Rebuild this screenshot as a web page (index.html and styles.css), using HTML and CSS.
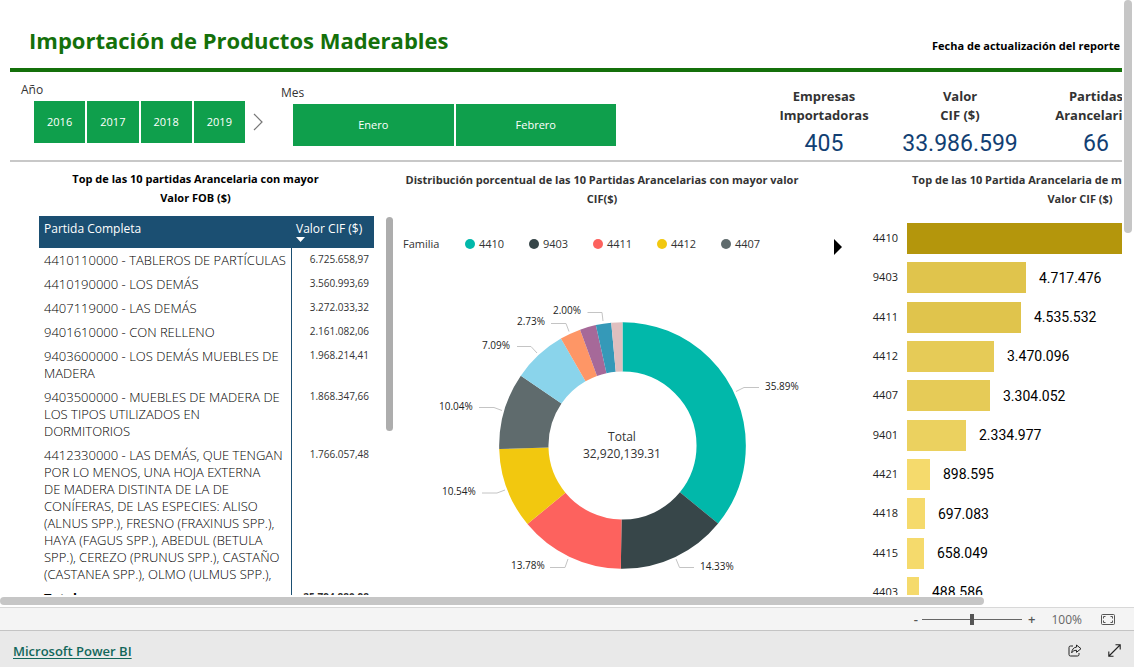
FILE: index.html
```html
<!DOCTYPE html>
<html lang="es">
<head>
<meta charset="utf-8">
<title>Importación de Productos Maderables</title>
<link rel="stylesheet" href="styles.css">
</head>
<body>
<div class="viewport">
  <main class="report">
    <header class="report-head">
      <h1>Importación de Productos Maderables</h1>
      <p class="updated">Fecha de actualización del reporte</p>
    </header>

    <section class="summary">
      <div class="slicer slicer-year">
        <h2>Año</h2>
        <div class="tiles">
          <button>2016</button><button>2017</button><button>2018</button><button>2019</button>
          <button class="next" aria-label="Siguiente"><svg width="10" height="18" viewBox="0 0 10 18"><path d="M1 1l8 8-8 8" fill="none" stroke="#777" stroke-width="1.2"/></svg></button>
        </div>
      </div>
      <div class="slicer slicer-month">
        <h2>Mes</h2>
        <div class="tiles"><button>Enero</button><button>Febrero</button></div>
      </div>
      <div class="kpi"><h3>Empresas<br>Importadoras</h3><p>405</p></div>
      <div class="kpi"><h3>Valor<br>CIF ($)</h3><p>33.986.599</p></div>
      <div class="kpi"><h3>Partidas<br>Arancelarias</h3><p>66</p></div>
    </section>

    <section class="panels">
      <article class="panel panel-table">
        <h2 class="dark">Top de las 10 partidas Arancelaria con mayor<br>Valor FOB ($)</h2>
        <div class="table-wrap">
          <table>
            <thead><tr><th>Partida Completa</th><th>Valor CIF ($)<i class="sort"></i></th></tr></thead>
            <tbody>
              <tr><td>4410110000 - TABLEROS DE PARTÍCULAS</td><td>6.725.658,97</td></tr>
              <tr><td>4410190000 - LOS DEMÁS</td><td>3.560.993,69</td></tr>
              <tr><td>4407119000 - LAS DEMÁS</td><td>3.272.033,32</td></tr>
              <tr><td>9401610000 - CON RELLENO</td><td>2.161.082,06</td></tr>
              <tr><td>9403600000 - LOS DEMÁS MUEBLES DE<br>MADERA</td><td>1.968.214,41</td></tr>
              <tr><td>9403500000 - MUEBLES DE MADERA DE<br>LOS TIPOS UTILIZADOS EN<br>DORMITORIOS</td><td>1.868.347,66</td></tr>
              <tr><td>4412330000 - LAS DEMÁS, QUE TENGAN<br>POR LO MENOS, UNA HOJA EXTERNA<br>DE MADERA DISTINTA DE LA DE<br>CONÍFERAS, DE LAS ESPECIES: ALISO<br>(ALNUS SPP.), FRESNO (FRAXINUS SPP.),<br>HAYA (FAGUS SPP.), ABEDUL (BETULA<br>SPP.), CEREZO (PRUNUS SPP.), CASTAÑO<br>(CASTANEA SPP.), OLMO (ULMUS SPP.),</td><td>1.766.057,48</td></tr>
            </tbody>
            <tfoot><tr><td>Total</td><td>25.794.880,98</td></tr></tfoot>
          </table>
          <div class="table-scroll"></div>
        </div>
      </article>

      <article class="panel panel-donut">
        <h2>Distribución porcentual de las 10 Partidas Arancelarias con mayor valor<br>CIF($)</h2>
        <div class="legend">
          <span class="legend-title">Familia</span>
          <ul>
            <li class="c4410">4410</li><li class="c9403">9403</li><li class="c4411">4411</li><li class="c4412">4412</li><li class="c4407">4407</li>
          </ul>
          <button class="more" aria-label="Más"><svg width="8" height="16" viewBox="0 0 8 16"><path d="M0 0l8 8-8 8z"/></svg></button>
        </div>
        <svg class="donut" width="460" height="325" viewBox="400 270 460 325" role="img" aria-label="Distribución por familia">
          <g class="slices" transform="rotate(-90 622.5 445.5)">
            <circle cx="622.5" cy="445.5" r="98.7" pathLength="100" stroke="#01b8aa" stroke-dasharray="35.89 64.11"/>
            <circle cx="622.5" cy="445.5" r="98.7" pathLength="100" stroke="#374649" stroke-dasharray="14.33 85.67" stroke-dashoffset="-35.89"/>
            <circle cx="622.5" cy="445.5" r="98.7" pathLength="100" stroke="#fd625e" stroke-dasharray="13.78 86.22" stroke-dashoffset="-50.22"/>
            <circle cx="622.5" cy="445.5" r="98.7" pathLength="100" stroke="#f2c80f" stroke-dasharray="10.54 89.46" stroke-dashoffset="-64"/>
            <circle cx="622.5" cy="445.5" r="98.7" pathLength="100" stroke="#5f6b6d" stroke-dasharray="10.04 89.96" stroke-dashoffset="-74.54"/>
            <circle cx="622.5" cy="445.5" r="98.7" pathLength="100" stroke="#8ad4eb" stroke-dasharray="7.09 92.91" stroke-dashoffset="-84.58"/>
            <circle cx="622.5" cy="445.5" r="98.7" pathLength="100" stroke="#fe9666" stroke-dasharray="2.73 97.27" stroke-dashoffset="-91.67"/>
            <circle cx="622.5" cy="445.5" r="98.7" pathLength="100" stroke="#a66999" stroke-dasharray="2.12 97.88" stroke-dashoffset="-94.4"/>
            <circle cx="622.5" cy="445.5" r="98.7" pathLength="100" stroke="#3599b8" stroke-dasharray="2 98" stroke-dashoffset="-96.52"/>
            <circle cx="622.5" cy="445.5" r="98.7" pathLength="100" stroke="#dfbfbf" stroke-dasharray="1.48 98.52" stroke-dashoffset="-98.52"/>
          </g>
          <g class="leaders">
            <path d="M736 391.500l8-4h15M676 559l3.500 8.500H694M550 567.500h15l3-8.500M482 493h15l8-3M479 407.500h15l8 3M517 346.500h14l6 6.500M551 323.500h15l3 8M587.500 312.500H602l1 8.500"/>
          </g>
          <g class="callouts">
            <text x="765" y="390">35.89%</text>
            <text x="700" y="570">14.33%</text>
            <text x="511" y="569">13.78%</text>
            <text x="442" y="495">10.54%</text>
            <text x="439" y="410">10.04%</text>
            <text x="482" y="349">7.09%</text>
            <text x="517" y="325">2.73%</text>
            <text x="553" y="314">2.00%</text>
          </g>
          <g class="center">
            <text x="622" y="441">Total</text>
            <text x="622" y="458">32,920,139.31</text>
          </g>
        </svg>
      </article>

      <article class="panel panel-bars">
        <h2><span class="lead">Top de las 10 Partida Arancelaria de mayor</span>Valor CIF ($)</h2>
        <ol class="bars">
          <li><span>4410</span><i class="b1" style="width:297px"></i></li>
          <li><span>9403</span><i class="b2" style="width:119px"></i><b>4.717.476</b></li>
          <li><span>4411</span><i class="b2" style="width:114px"></i><b>4.535.532</b></li>
          <li><span>4412</span><i class="b3" style="width:87px"></i><b>3.470.096</b></li>
          <li><span>4407</span><i class="b3" style="width:83px"></i><b>3.304.052</b></li>
          <li><span>9401</span><i class="b4" style="width:59px"></i><b>2.334.977</b></li>
          <li><span>4421</span><i class="b5" style="width:23px"></i><b>898.595</b></li>
          <li><span>4418</span><i class="b5" style="width:18px"></i><b>697.083</b></li>
          <li><span>4415</span><i class="b5" style="width:17px"></i><b>658.049</b></li>
          <li><span>4403</span><i class="b5" style="width:12px"></i><b>488.586</b></li>
        </ol>
      </article>
    </section>
  </main>
  <div class="track-y"><div class="thumb-y"></div></div>
  <div class="track-x"><div class="thumb-x"></div></div>
</div>

<div class="zoombar">
  <button aria-label="Alejar">-</button>
  <input type="range" min="0" max="100" value="50" aria-label="Zoom">
  <button aria-label="Acercar">+</button>
  <span class="pct">100%</span>
  <button class="fit" aria-label="Ajustar a la página">
    <svg width="14" height="11" viewBox="0 0 14 11" fill="none" stroke="#555"><rect x=".5" y=".5" width="13" height="10" rx="1"/><path d="M2.500 4.500v-2h2M9.500 2.500h2v2M11.500 6.500v2h-2M4.500 8.500h-2v-2"/></svg>
  </button>
</div>

<footer class="footer">
  <a href="#">Microsoft Power BI</a>
  <div class="actions">
    <button aria-label="Compartir">
      <svg width="14" height="13" viewBox="0 0 14 13" fill="none" stroke="#222" stroke-linejoin="round"><path d="M5 2H2.500A1.500 1.500 0 0 0 1 3.500v7A1.500 1.500 0 0 0 2.500 12h7a1.500 1.500 0 0 0 1.500-1.500V9"/><path d="M8.500 1l4.500 3.700-4.500 3.600V6.300C6.200 6.300 4.800 7 3.700 8.800 4 5.500 5.600 3.300 8.500 3.100z"/></svg>
    </button>
    <button aria-label="Pantalla completa">
      <svg width="13" height="13" viewBox="0 0 13 13" fill="none" stroke="#222" stroke-width="1.100"><path d="M1 12L12 1M7.500 .8h4.700v4.700M.8 7.500v4.700h4.700"/></svg>
    </button>
  </div>
</footer>
</body>
</html>
```
FILE: styles.css
```css
* { box-sizing: border-box; }
body {
  margin: 0;
  height: 100vh;
  display: flex;
  flex-direction: column;
  overflow: hidden;
  background: #fff;
  color: #333;
  font-family: "Open Sans", "Noto Sans", sans-serif;
  font-size: 12px;
}
h1, h2, h3, p, ul, ol { margin: 0; padding: 0; list-style: none; }
button { margin: 0; padding: 0; border: 0; background: none; font: inherit; color: inherit; cursor: pointer; }
svg { display: block; }

/* Scrollable report area */
.viewport {
  flex: 1;
  min-height: 0;
  display: grid;
  grid-template: minmax(0, 1fr) 12px / minmax(0, 1fr) 12px;
}
.report { overflow: hidden; padding-left: 10px; }
.track-y { padding: 0 2px; }
.thumb-y { height: 233px; border-radius: 4px; background: #c6c6c6; }
.track-x { padding: 2px 0; }
.thumb-x { width: 87.7%; height: 8px; border-radius: 4px; background: #c6c6c6; }

.report-head {
  display: flex;
  align-items: center;
  width: 1260px;
  height: 72px;
  padding: 14px 0 0 19px;
  border-bottom: 4px solid #14700a;
}
h1 { width: 903px; padding-bottom: 2px; font-size: 22px; font-weight: 700; line-height: 32px; color: #14700a; white-space: nowrap; }
.updated { padding-top: 9px; font-size: 11px; font-weight: 700; color: #000; white-space: nowrap; }

.summary {
  display: grid;
  grid-template-columns: 271px 475px repeat(3, 136px);
  width: 1260px;
  height: 90px;
  border-bottom: 2px solid #c8c8c8;
}
.slicer h2 { font-size: 12px; font-weight: 400; line-height: 16px; }
.slicer-year { padding: 10px 0 0 11px; }
.slicer-month { padding: 13px 0 0; }
.tiles { display: grid; gap: 2px; margin: 3px 0 0 13px; font-size: 11px; color: #fff; }
.tiles button { height: 42px; padding-bottom: 2px; background: #0f9f4c; }
.slicer-year .tiles { grid-template-columns: repeat(4, 1fr) 22px; width: 235px; }
.slicer-month .tiles { grid-template-columns: 1fr 1fr; width: 323px; margin: 3px 0 0 12px; }
.tiles .next { display: grid; place-items: center; padding: 0; background: none; }
.kpi { padding-top: 15px; text-align: center; }
.kpi h3 { font-size: 13px; font-weight: 700; line-height: 19px; }
.kpi p { padding-top: 3px; font-family: Roboto, sans-serif; font-size: 23px; line-height: 32px; color: #123f73; }

.panels { display: grid; grid-template-columns: 390px 470px 400px; width: 1260px; }
.panel h2 { padding-top: 8px; font-size: 11px; font-weight: 700; line-height: 19px; text-align: center; white-space: nowrap; }
.panel .dark { width: 371px; padding-top: 7px; color: #000; }

.table-wrap { display: flex; align-items: flex-start; gap: 12px; margin: 9px 0 0 29px; }
table { width: 335px; border-collapse: collapse; table-layout: fixed; }
th { height: 32px; padding: 4px 5px 0; background: #1b4f72; color: #fff; font-size: 12px; font-weight: 400; line-height: 17px; text-align: left; vertical-align: top; }
th:last-child { width: 83px; padding-right: 0; white-space: nowrap; }
.sort { display: block; width: 9px; height: 5px; background: #fff; clip-path: polygon(0 0, 100% 0, 50% 100%); }
td { padding: 4px 0 3px 5px; font-size: 13px; font-weight: 300; line-height: 17px; color: #000; vertical-align: top; white-space: nowrap; }
td:last-child { padding: 3px 5px 0 0; border-left: 1px solid #1b4f72; font-size: 10px; font-weight: 400; color: #333; text-align: right; }
tfoot td, tfoot td:last-child { font-weight: 700; }
.table-scroll { width: 7px; height: 214px; margin-top: 1px; border-radius: 4px; background: #adadad; }

.panel-donut h2 { width: 404px; }
.legend { display: flex; align-items: center; height: 18px; margin: 27px 0 0 3px; font-size: 11px; line-height: 18px; }
.legend-title { width: 62px; }
.legend ul { display: flex; }
.legend li { display: flex; align-items: center; gap: 4px; width: 64px; }
.legend li::before { content: ""; width: 10px; height: 10px; border-radius: 50%; background: var(--c); }
.c4410 { --c: #01b8aa; }
.c9403 { --c: #374649; }
.c4411 { --c: #fd625e; }
.c4412 { --c: #f2c80f; }
.c4407 { --c: #5f6b6d; }
.more { margin: 6px 0 0 49px; }
.donut { margin-top: 17px; }
.slices circle { fill: none; stroke-width: 49.3px; }
.leaders path { fill: none; stroke: #c4c4c4; }
.callouts { font-size: 10px; fill: #222; }
.center { font-size: 12px; fill: #333; text-anchor: middle; }

.panel-bars h2 { width: 420px; }
.lead { display: block; padding-left: 42px; text-align: left; }
.bars { display: flex; flex-direction: column; justify-content: space-between; height: 385px; margin-top: 15px; }
.bars li { display: flex; align-items: center; height: 31px; }
.bars span { width: 28px; margin-right: 9px; padding-bottom: 2px; font-size: 11px; text-align: right; color: #222; }
.bars i { height: 31px; margin-right: 13px; }
.bars b { font-family: Roboto, sans-serif; font-size: 14px; font-weight: 400; color: #000; }
.b1 { background: #b4960c; }
.b2 { background: #e0c44c; }
.b3 { background: #e6cb57; }
.b4 { background: #ebd15f; }
.b5 { background: #f5da6c; }

.zoombar {
  display: flex;
  align-items: center;
  justify-content: flex-end;
  height: 23px;
  padding-right: 19px;
  border-top: 1px solid #d8d8d8;
  background: #f4f4f4;
  color: #555;
}
.zoombar button { font-size: 13px; font-weight: 600; line-height: 18px; }
.zoombar input { appearance: none; width: 100px; height: 12px; margin: 0 6px 0 4px; background: linear-gradient(#666, #666) center / 100% 1px no-repeat; }
.zoombar input::-webkit-slider-thumb { appearance: none; width: 4px; height: 11px; background: #555; }
.pct { margin: 0 19px 0 16px; color: #666; }

.footer {
  display: flex;
  align-items: center;
  justify-content: space-between;
  height: 37px;
  padding: 3px 13px 0;
  border-top: 1px solid #c4c4c4;
  background: #e9e9e9;
}
.footer a { font-size: 13px; font-weight: 600; color: #12675b; text-underline-offset: 2px; }
.actions { display: flex; gap: 26px; }
```
